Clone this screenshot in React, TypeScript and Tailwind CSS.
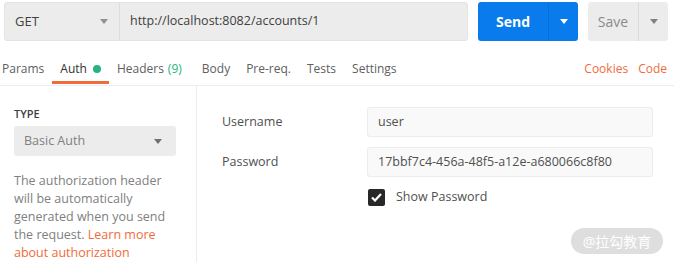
import React from "react";

function Caret({ className = "" }: { className?: string }) {
  return (
    <svg width="8" height="5" viewBox="0 0 8 5" className={className}>
      <path d="M0 0 L8 0 L4 5 Z" fill="currentColor" />
    </svg>
  );
}

export default function App() {
  const tabs = [
    { label: "Params" },
    { label: "Auth", active: true },
    { label: "Headers", count: "(9)" },
    { label: "Body" },
    { label: "Pre-req." },
    { label: "Tests" },
    { label: "Settings" },
  ];

  return (
    <div
      className="relative w-[674px] h-[262px] overflow-hidden bg-white text-[12px] text-[#505050]"
      style={{ fontFamily: '"Open Sans", "Noto Sans CJK SC", sans-serif' }}
    >
      {/* request bar */}
      <div className="flex items-stretch h-[39px] mt-[2px] pl-[4px]">
        <div className="flex w-[464px] rounded-[3px] border border-[#e3e3e3] bg-[#ececec]">
          <div className="flex items-center justify-between w-[115px] pl-[10px] pr-[11px] border-r border-[#dcdcdc] text-[13px] text-[#404040]">
            <span>GET</span>
            <Caret className="text-[#909090]" />
          </div>
          <div className="flex items-center pl-[10px] text-[12.5px] text-[#404040]">
            http://localhost:8082/accounts/1
          </div>
        </div>
        <div className="ml-[10px] flex w-[100px] rounded-[3px] bg-[#097bed] text-white">
          <div className="flex-1 flex items-center justify-center font-bold text-[14px]">Send</div>
          <div className="w-[30px] flex items-center justify-center border-l border-[#0a6fd4]">
            <Caret />
          </div>
        </div>
        <div className="ml-[10px] flex w-[80px] rounded-[3px] bg-[#ececec]">
          <div className="flex-1 flex items-center justify-center text-[14px] text-[#8a8a8a]">Save</div>
          <div className="w-[30px] flex items-center justify-center border-l border-[#dadada] text-[#808080]">
            <Caret />
          </div>
        </div>
      </div>

      {/* tabs */}
      <div className="flex items-stretch h-[45px] border-b border-[#ececec] text-[12px] leading-[18px]">
        <div className="flex items-stretch pl-[2px]">
          {tabs.map((t, i) => (
            <div
              key={t.label}
              className={`relative flex items-start pt-[19px] ${i === 0 ? "pr-[8px]" : "px-[8px]"} ${
                t.active ? "text-[#303030]" : "text-[#606060]"
              } ${t.label === "Body" ? "ml-[4px]" : ""}`}
            >
              <span>{t.label}</span>
              {t.active && <span className="ml-[6px] mt-[5px] w-[8px] h-[8px] rounded-full bg-[#26b47f]" />}
              {t.count && <span className="ml-[4px] text-[#26b47f]">{t.count}</span>}
              {t.active && (
                <span className="absolute left-0 right-0 bottom-[1px] h-[3px] bg-[#f26b3a]" />
              )}
            </div>
          ))}
        </div>
        <div className="ml-auto flex items-start pt-[19px] gap-[10px] pr-[7px] text-[#f26b3a]">
          <span>Cookies</span>
          <span>Code</span>
        </div>
      </div>

      {/* auth body */}
      <div className="flex h-[176px]">
        <div className="w-[197px] border-r border-[#ececec] pl-[14px] pr-[20px] pt-[21px]">
          <div className="text-[11px] font-semibold text-[#404040] leading-[14px]">TYPE</div>
          <div className="mt-[5px] flex items-center justify-between h-[30px] rounded-[3px] bg-[#ececec] pl-[10px] pr-[14px] text-[#808080] text-[12.5px]">
            <span>Basic Auth</span>
            <Caret className="text-[#707070]" />
          </div>
          <p className="mt-[16px] leading-[18px] text-[12.5px] text-[#808080]">
            The authorization header will be automatically generated when you send the request.{" "}
            <span className="text-[#f26b3a]">Learn more about authorization</span>
          </p>
        </div>

        <div className="flex-1 pt-[21px] pl-[25px] pr-[21px]">
          <div className="flex items-center h-[30px]">
            <span className="w-[145px] text-[12.5px] text-[#505050]">Username</span>
            <div className="flex-1 flex items-center h-[30px] rounded-[3px] border border-[#ececec] bg-[#f9f9f9] pl-[10px] text-[12.5px] text-[#505050]">
              user
            </div>
          </div>
          <div className="flex items-center h-[30px] mt-[10px]">
            <span className="w-[145px] text-[12.5px] text-[#505050]">Password</span>
            <div className="flex-1 flex items-center h-[30px] rounded-[3px] border border-[#ececec] bg-[#f9f9f9] pl-[10px] text-[12.5px] text-[#505050]">
              17bbf7c4-456a-48f5-a12e-a680066c8f80
            </div>
          </div>
          <div className="flex items-center mt-[11px] ml-[146px]">
            <span className="flex items-center justify-center w-[17px] h-[17px] rounded-[2px] bg-[#282828]">
              <svg width="11" height="9" viewBox="0 0 11 9">
                <path d="M1 4.5 L4 7.5 L10 1" stroke="white" strokeWidth="2.2" fill="none" />
              </svg>
            </span>
            <span className="ml-[11px] text-[12.5px] text-[#505050]">Show Password</span>
          </div>
        </div>
      </div>

      {/* watermark */}
      <div className="absolute left-[571px] top-[228px] w-[92px] h-[26px] rounded-full bg-[#d6d6d6]/80 flex items-center justify-center text-white text-[14px]">
        @拉勾教育
      </div>
    </div>
  );
}
